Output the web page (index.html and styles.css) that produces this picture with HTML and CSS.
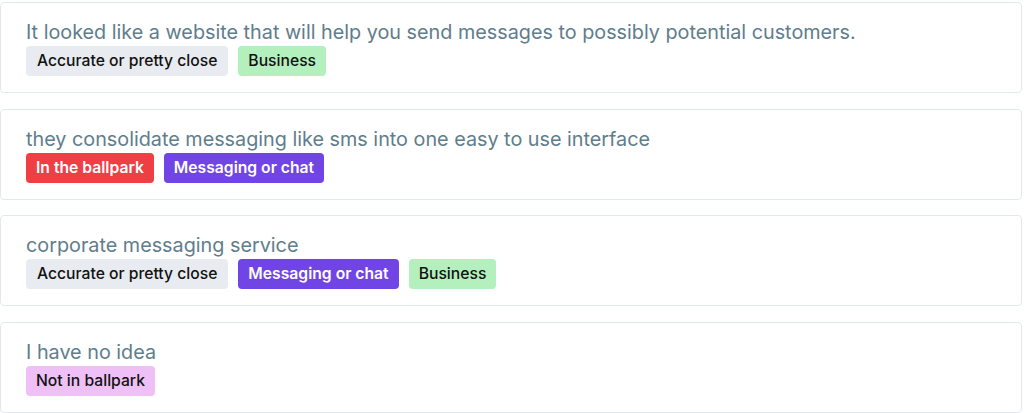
FILE: index.html
```html
<!DOCTYPE html>
<html lang="en">
<head>
  <meta charset="UTF-8" />
  <meta name="viewport" content="width=device-width, initial-scale=1.0"/>
  <title>Responses</title>
  <link rel="stylesheet" href="styles.css">
</head>
<body>
  <div class="responses">
    <div class="card">
      <p class="answer">It looked like a website that will help you send messages to possibly potential customers.</p>
      <div class="tags">
        <span class="tag tag-gray">Accurate or pretty close</span>
        <span class="tag tag-green">Business</span>
      </div>
    </div>

    <div class="card">
      <p class="answer">they consolidate messaging like sms into one easy to use interface</p>
      <div class="tags">
        <span class="tag tag-red">In the ballpark</span>
        <span class="tag tag-purple">Messaging or chat</span>
      </div>
    </div>

    <div class="card">
      <p class="answer">corporate messaging service</p>
      <div class="tags">
        <span class="tag tag-gray">Accurate or pretty close</span>
        <span class="tag tag-purple">Messaging or chat</span>
        <span class="tag tag-green">Business</span>
      </div>
    </div>

    <div class="card">
      <p class="answer">I have no idea</p>
      <div class="tags">
        <span class="tag tag-pink">Not in ballpark</span>
      </div>
    </div>
  </div>
</body>
</html>
```

FILE: styles.css
```css
body {
  margin: 0;
  font-family: Inter, 'Liberation Sans', Arial, sans-serif;
  background: #fff;
}
.responses {
  display: flex;
  flex-direction: column;
  gap: 15.7px;
  padding-top: 2px;
  width: 1022px;
}
.card {
  border: 1px solid #e2e8f0;
  border-radius: 4px;
  padding: 17px 25px 16px 25px;
}
.answer {
  margin: 0 0 2px 0;
  font-size: 19.8px;
  line-height: 24px;
  color: #607d8b;
}
.tags {
  display: flex;
  gap: 10px;
}
.tag {
  display: inline-block;
  height: 30px;
  line-height: 30px;
  padding: 0 10px;
  border-radius: 4px;
  font-size: 15.7px;
  font-weight: 500;
  color: #111;
}
.tag-gray {
  background: #e8ebef;
  padding: 0 11px;
}
.tag-green {
  background: #b3f0bd;
}
.tag-red {
  background: #f03e45;
  color: #fff;
  font-weight: 600;
}
.tag-purple {
  background: #7145e5;
  color: #fff;
  font-weight: 600;
}
.tag-pink {
  background: #eec0f5;
}
```
